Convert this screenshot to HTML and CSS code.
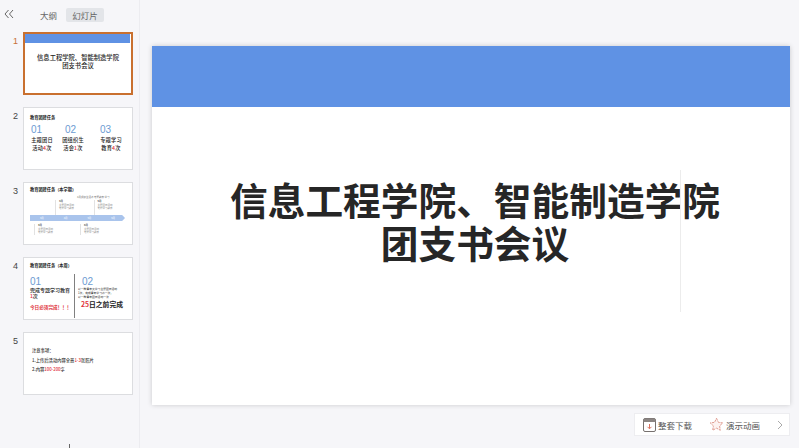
FILE: index.html
```html
<!DOCTYPE html>
<html lang="zh-CN">
<head>
    <meta charset="UTF-8">
    <title>幻灯片预览</title>
    <link rel="stylesheet" href="styles.css">
</head>
<body>
    <div class="app">
        <div class="sidebar">
            <div class="tabs">
                <svg class="collapse" width="10" height="10" viewBox="0 0 10 10"><path d="M4.500 1 1 5l3.500 4M9 1 5.500 5 9 9"/></svg>
                <span class="tab">大纲</span>
                <span class="tab tab-active">幻灯片</span>
            </div>

            <div class="thumb-row">
                <span class="thumb-num num-active">1</span>
                <div class="thumb thumb-active">
                    <div class="t1-bar"></div>
                    <div class="t1-title">信息工程学院、智能制造学院<br>团支书会议</div>
                </div>
            </div>

            <div class="thumb-row">
                <span class="thumb-num">2</span>
                <div class="thumb">
                    <div class="t-head">教育团建任务</div>
                    <div class="t2-cols">
                        <div class="t2-col"><div class="t-big">01</div><div class="t2-text">主题团日<br>活动<em>4</em>次</div></div>
                        <div class="t2-col"><div class="t-big">02</div><div class="t2-text">团组织生<br>活会<em>1</em>次</div></div>
                        <div class="t2-col"><div class="t-big">03</div><div class="t2-text">专题学习<br>教育<em>4</em>次</div></div>
                    </div>
                </div>
            </div>

            <div class="thumb-row">
                <span class="thumb-num">3</span>
                <div class="thumb">
                    <div class="t-head t3-head">教育团建任务（本学期）</div>
                    <div class="t3-caption">4月组织生活会 专题教育 学习</div>
                    <div class="t3-top">
                        <div class="t3-note"><b>3月</b>主题团日活动<br>专题学习教育</div>
                        <div class="t3-note"><b>5月</b>主题团日活动<br>专题学习教育</div>
                    </div>
                    <div class="t3-arrow"><span>3月</span><span>4月</span><span>5月</span><span>6月</span></div>
                    <div class="t3-bottom">
                        <div class="t3-note"><b>4月</b>主题团日活动<br>专题学习教育</div>
                        <div class="t3-note"><b>6月</b>主题团日活动<br>专题学习教育</div>
                    </div>
                </div>
            </div>

            <div class="thumb-row">
                <span class="thumb-num">4</span>
                <div class="thumb">
                    <div class="t-head t4-head">教育团建任务（本周）</div>
                    <div class="t4-cols">
                        <div class="t4-left">
                            <div class="t-big t4-big">01</div>
                            <div class="t4-text">完成专题学习教育<br><em>1</em>次</div>
                            <div class="t4-must">今日必须完成！！！</div>
                        </div>
                        <div class="t4-right">
                            <div class="t-big t4-big">02</div>
                            <div class="t4-small">以一种青年大学习主题团日活动<br>1次，完成青年学习会一次，<br>以一种青年团日活动一次</div>
                            <div class="t4-date"><em>25</em>日之前完成</div>
                        </div>
                    </div>
                </div>
            </div>

            <div class="thumb-row">
                <span class="thumb-num">5</span>
                <div class="thumb t5">
                    <div>注意事项：</div>
                    <div>1.上传后活动内容全景<em>1-3</em>张照片</div>
                    <div>2.内容<em>100-200</em>字</div>
                </div>
            </div>

            <div class="side-tick"></div>
        </div>

        <div class="main">
            <div class="slide">
                <div class="slide-bar"></div>
                <h1 class="slide-title">信息工程学院、智能制造学院<br>团支书会议</h1>
                <div class="slide-guide"></div>
            </div>
            <div class="toolbar">
                <div class="tool">
                    <svg width="13" height="14" viewBox="0 0 13 14"><rect x="0.500" y="0.500" width="12" height="13" rx="1.500" fill="#fff" stroke="#77716f"/><path d="M.5 4h12V2A1.500 1.500 0 0 0 11 .5H2A1.500 1.500 0 0 0 .5 2z" fill="#8b8583"/><path d="M6.500 6v4.500M4.500 8.800l2 2 2-2" fill="none" stroke="#d9705f"/></svg>
                    <span>整套下载</span>
                </div>
                <div class="tool">
                    <svg width="15" height="15" viewBox="0 0 18 18"><path d="M9 1.500l2.300 4.900 5.200.7-3.800 3.600.9 5.200L9 13.400l-4.600 2.500.9-5.200L1.500 7.100l5.200-.7z" fill="#fdf3f1" stroke="#d98a7d" stroke-dasharray="3 1"/></svg>
                    <span>演示动画</span>
                </div>
                <svg class="tool-next" width="6" height="10" viewBox="0 0 6 10"><path d="M1 1l4 4-4 4"/></svg>
            </div>
        </div>
    </div>
</body>
</html>
```

FILE: styles.css
```css
html, body {
    margin: 0;
    padding: 0;
}

body {
    font-family: "Noto Sans CJK SC", "Liberation Sans", sans-serif;
    background-color: #f6f6f9;
    color: #222;
    overflow: hidden;
}

em {
    font-style: normal;
    color: #e0323c;
}

.app {
    display: flex;
    width: 799px;
    height: 448px;
}

/* Left column */
.sidebar {
    position: relative;
    width: 139px;
    height: 448px;
    border-right: 1px solid #ececf0;
}

.tabs {
    position: relative;
    display: flex;
    align-items: center;
    height: 14px;
    padding: 8px 0 3px 40px;
    gap: 9px;
}

.collapse {
    position: absolute;
    left: 4px;
    top: 9px;
    fill: none;
    stroke: #666;
    stroke-width: 1;
}

.tab {
    font-size: 8.500px;
    line-height: 14px;
    color: #666;
}

.tab-active {
    width: 38px;
    text-align: center;
    background-color: #e3e5e9;
    border-radius: 2px;
}

.thumb-row {
    display: flex;
    margin-top: 12px;
    height: 63px;
}

.tabs + .thumb-row {
    margin-top: 7px;
}

.thumb-num {
    width: 23px;
    padding-left: 13px;
    box-sizing: border-box;
    font-family: "Liberation Sans", sans-serif;
    font-size: 9px;
    line-height: 19px;
    color: #444;
}

.num-active {
    color: #c8703a;
}

.thumb {
    width: 110px;
    height: 63px;
    box-sizing: border-box;
    background-color: white;
    border: 1px solid #dcdde0;
    overflow: hidden;
}

.thumb-active {
    border: 2px solid #c9702f;
}

.t1-bar {
    height: 9px;
    background-color: #5f92e4;
    margin-right: 1px;
}

.t1-title {
    margin-top: 11px;
    font-size: 6.300px;
    line-height: 7.500px;
    font-weight: 500;
    text-align: center;
}

.t-head {
    padding: 6px 0 0 6px;
    font-size: 4.200px;
    line-height: 6px;
    font-weight: 700;
}

.t-big {
    font-family: "Liberation Sans", sans-serif;
    font-size: 10px;
    line-height: 11px;
    color: #6c9bd2;
}

.t2-cols {
    display: grid;
    grid-template-columns: 31px 38px 30px;
    padding: 4px 0 0 7px;
}

.t2-col:nth-child(2) .t-big {
    margin-left: 3px;
}

.t2-text {
    width: 22px;
    margin-top: 1px;
    font-size: 5.200px;
    letter-spacing: 0.2px;
    line-height: 7.600px;
    font-weight: 500;
    text-align: center;
}

/* Slide 3: timeline */
.t3-head {
    padding-top: 3px;
}

.t3-caption {
    margin: 3px 0 0 53px;
    font-size: 2.500px;
    line-height: 4px;
    color: #666;
    white-space: nowrap;
}

.t3-top {
    display: flex;
    height: 15px;
    margin-top: 1px;
    padding-left: 31px;
}

.t3-note {
    width: 42px;
    padding-left: 3px;
    border-left: 1px solid #e2e2e2;
    font-size: 2.500px;
    line-height: 3.500px;
    color: #888;
}

.t3-note b {
    display: block;
    color: #333;
}

.t3-arrow {
    display: flex;
    justify-content: space-around;
    width: 95px;
    height: 6px;
    margin-left: 6px;
    background-color: #a9c4ec;
    clip-path: polygon(0 0, 97% 0, 100% 50%, 97% 100%, 0 100%);
    font-size: 2.500px;
    line-height: 6px;
    color: #fff;
}

.t3-bottom {
    display: flex;
    padding: 3px 0 0 10px;
}

/* Slide 4: two columns */
.t4-head {
    padding-top: 5px;
    line-height: 5px;
}

.t4-cols {
    display: flex;
    margin-top: 6px;
}

.t4-left {
    width: 51px;
    height: 44px;
    box-sizing: border-box;
    padding: 2px 0 0 6px;
    border-right: 1.500px solid #808080;
}

.t4-text {
    font-size: 5px;
    line-height: 5.500px;
    font-weight: 500;
    white-space: nowrap;
}

.t4-must {
    margin-top: 6px;
    font-size: 4.600px;
    line-height: 6px;
    color: #e0323c;
    font-weight: 700;
    white-space: nowrap;
}

.t4-right {
    padding: 2px 0 0 7px;
}

.t4-small {
    margin: 1px 0 0 -4px;
    font-size: 2.800px;
    line-height: 3.800px;
    white-space: nowrap;
}

.t4-date {
    margin: 1px 0 0 -1px;
    font-size: 6.800px;
    line-height: 9px;
    font-weight: 700;
    white-space: nowrap;
}

.t5 {
    padding: 15px 0 0 8px;
    font-size: 4.300px;
    line-height: 5px;
    font-weight: 500;
    color: #333;
}

.t5 div {
    margin-bottom: 4.500px;
}

.side-tick {
    position: absolute;
    left: 69px;
    bottom: 0;
    width: 1px;
    height: 4px;
    background-color: #666;
}

/* Main preview */
.main {
    flex: 1;
    padding: 46px 9px 0 12px;
}

.slide {
    position: relative;
    height: 359px;
    background-color: white;
    box-shadow: 0 0 5px rgba(0,0,0,0.18);
}

.slide-bar {
    height: 61px;
    background-color: #5f92e4;
}

.slide-title {
    margin: 70px 0 0 8px;
    font-size: 37.700px;
    line-height: 43px;
    font-weight: 700;
    color: #262626;
    text-align: center;
}

.slide-guide {
    position: absolute;
    left: 528px;
    top: 124px;
    width: 1px;
    height: 142px;
    background-color: #ececec;
}

.toolbar {
    display: flex;
    align-items: center;
    width: 156px;
    height: 23px;
    margin: 8px 0 0 auto;
    padding-left: 8px;
    box-sizing: border-box;
    background-color: white;
    border: 1px solid #ededf0;
}

.tool {
    display: flex;
    align-items: center;
    gap: 2px;
    margin-right: 17px;
    font-size: 8.500px;
    color: #555;
    white-space: nowrap;
}

.tool-next {
    fill: none;
    stroke: #aaa;
}
```
